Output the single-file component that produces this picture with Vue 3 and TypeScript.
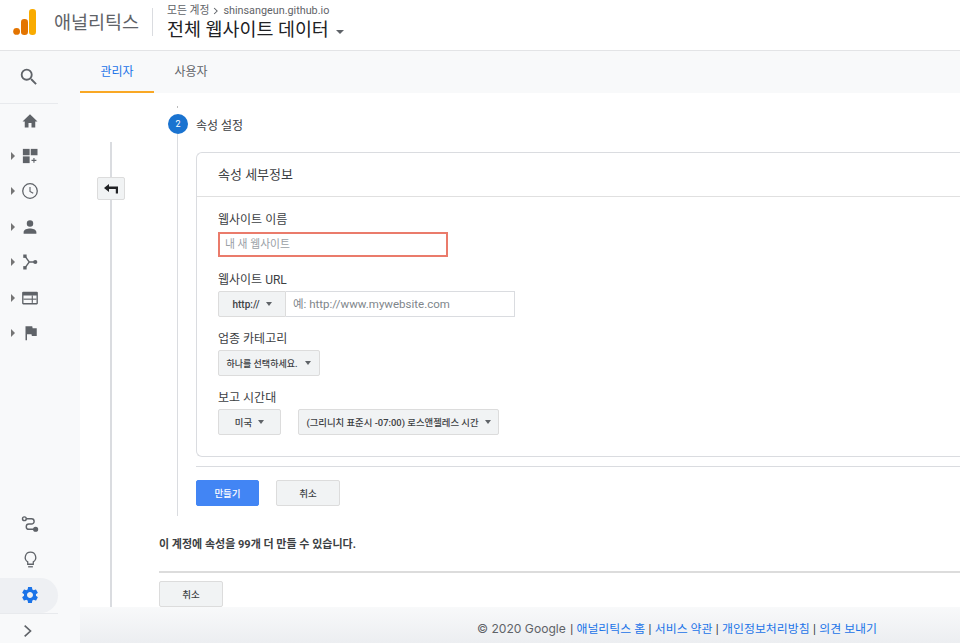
<script setup lang="ts">
const navTop = [
  { id: 'home', arrow: false },
  { id: 'custom', arrow: true },
  { id: 'clock', arrow: true },
  { id: 'person', arrow: true },
  { id: 'acq', arrow: true },
  { id: 'behavior', arrow: true },
  { id: 'flag', arrow: true },
]
const footerLinks = ['애널리틱스 홈', '서비스 약관', '개인정보처리방침', '의견 보내기']
</script>

<template>
  <div class="app">
    <header class="topbar">
      <svg class="logo" viewBox="0 0 24 26" width="24" height="26">
        <rect x="16" y="0" width="7" height="26" rx="3.2" fill="#f9ab00" />
        <rect x="8" y="10" width="7" height="16" rx="3.2" fill="#e37400" />
        <circle cx="3.6" cy="22.4" r="3.4" fill="#e37400" />
      </svg>
      <span class="brand">애널리틱스</span>
      <div class="divider"></div>
      <div class="crumbs">
        <div class="crumb-top">
          <span>모든 계정</span>
          <svg viewBox="0 0 8 10" width="6" height="8"><path d="M1.5 1l4 4-4 4" fill="none" stroke="#5f6368" stroke-width="1.4" /></svg>
          <span>shinsangeun.github.io</span>
        </div>
        <div class="view-name">전체 웹사이트 데이터<i class="caret big"></i></div>
      </div>
    </header>

    <div class="body">
      <aside class="sidebar">
        <div class="nav-search">
          <svg viewBox="0 0 24 24" width="22" height="22"><path fill="#5f6368" d="M15.5 14h-.79l-.28-.27A6.47 6.47 0 0 0 16 9.5 6.5 6.5 0 1 0 9.5 16c1.61 0 3.09-.59 4.23-1.57l.27.28v.79l5 4.99L20.49 19l-4.99-5zm-6 0C7.01 14 5 11.99 5 9.5S7.01 5 9.5 5 14 7.01 14 9.5 11.99 14 9.5 14z" /></svg>
        </div>
        <nav class="nav-list">
          <div v-for="item in navTop" :key="item.id" class="nav-row">
            <i v-if="item.arrow" class="tri"></i>
            <svg viewBox="0 0 24 24" width="18" height="18" fill="#5f6368">
              <path v-if="item.id === 'home'" d="M10 20.5v-6h4v6h5v-8h3L12 3 2 12.500h3v8z" />
              <template v-else-if="item.id === 'custom'">
                <rect x="2.500" y="2.500" width="9" height="8.500" />
                <rect x="13" y="2.500" width="9" height="8.500" />
                <rect x="2.500" y="12.500" width="9" height="9" />
                <path d="M16.500 14.500h1.500v2.500h2.500v1.500H18V21h-1.500v-2.500H14V17h2.500z" />
              </template>
              <template v-else-if="item.id === 'clock'">
                <circle cx="12" cy="12" r="9.700" fill="none" stroke="#5f6368" stroke-width="1.700" />
                <path d="M12 6.500v6l4.300 2.600" fill="none" stroke="#5f6368" stroke-width="1.500" />
              </template>
              <path v-else-if="item.id === 'person'" d="M12 11.500a4.300 4.300 0 1 0 0-8.600 4.300 4.300 0 0 0 0 8.600zm0 2.500c-3.300 0-8.500 1.500-8.500 4.600V21h17v-2.400c0-3.100-5.200-4.600-8.500-4.600z" />
              <template v-else-if="item.id === 'acq'">
                <rect x="3" y="2" width="4.500" height="4.500" />
                <rect x="3" y="17.500" width="4.500" height="4.500" />
                <circle cx="19" cy="12" r="2.800" />
                <path d="M5.500 4.500L11 12H18M11 12L5.500 19.500" fill="none" stroke="#5f6368" stroke-width="1.800" />
              </template>
              <template v-else-if="item.id === 'behavior'">
                <path fill-rule="evenodd" d="M3 3.500h18a1.500 1.500 0 0 1 1.500 1.500v14a1.500 1.500 0 0 1-1.500 1.500H3A1.500 1.500 0 0 1 1.500 19V5A1.500 1.500 0 0 1 3 3.500zM3.300 8.500v10.200h17.400V8.500z" />
                <rect x="3.300" y="12.800" width="17.400" height="1.500" />
                <rect x="14.300" y="8.500" width="1.500" height="10" />
              </template>
              <path v-else d="M6 3h9l.5 2.500H21V16h-6.500L14 13.500H8v8H6z" />
            </svg>
          </div>
        </nav>
        <div class="nav-bottom">
          <div class="nav-row">
            <svg viewBox="0 0 24 24" width="18" height="18" fill="none" stroke="#5f6368" stroke-width="1.900">
              <circle cx="4.500" cy="5" r="2.500" />
              <circle cx="19.500" cy="19" r="2.500" fill="#5f6368" />
              <path d="M7 5h7a3.500 3.500 0 0 1 0 7h-3.500a3.500 3.500 0 0 0 0 7H17" />
            </svg>
          </div>
          <div class="nav-row">
            <svg viewBox="0 0 24 24" width="19" height="19" fill="none" stroke="#5f6368" stroke-width="1.600">
              <path d="M12 2.800a6.600 6.600 0 0 0-3.500 12.200V18h7v-3A6.600 6.600 0 0 0 12 2.800z" />
              <path d="M9 21.200h6" />
            </svg>
          </div>
          <div class="nav-row active">
            <svg viewBox="0 0 24 24" width="20" height="20"><path fill="#1a73e8" d="M19.140 12.940c.04-.3.06-.61.06-.94 0-.32-.02-.64-.07-.94l2.030-1.580a.49.49 0 0 0 .12-.61l-1.920-3.320a.488.488 0 0 0-.59-.22l-2.390.96c-.5-.38-1.030-.7-1.620-.94l-.36-2.540a.484.484 0 0 0-.48-.41h-3.840c-.24 0-.43.17-.47.41l-.36 2.540c-.59.24-1.130.57-1.620.94l-2.390-.96c-.22-.08-.47 0-.59.22L2.740 8.870c-.12.21-.08.47.12.61l2.030 1.580c-.05.3-.09.63-.09.94s.02.64.07.94l-2.030 1.580a.49.49 0 0 0-.12.61l1.920 3.320c.12.22.37.29.59.22l2.390-.96c.5.38 1.030.7 1.620.94l.36 2.540c.05.24.24.41.48.41h3.840c.24 0 .44-.17.47-.41l.36-2.540c.59-.24 1.130-.56 1.620-.94l2.390.96c.22.08.47 0 .59-.22l1.920-3.320c.12-.22.07-.47-.12-.61l-2.010-1.580zM12 15.600c-1.980 0-3.600-1.620-3.600-3.600s1.620-3.600 3.600-3.600 3.600 1.620 3.600 3.600-1.620 3.600-3.600 3.600z" /></svg>
          </div>
          <div class="nav-row expand">
            <svg viewBox="0 0 12 16" width="10" height="14"><path d="M2 1.500L9 8l-7 6.500" fill="none" stroke="#5f6368" stroke-width="2" /></svg>
          </div>
        </div>
      </aside>

      <div class="main">
        <div class="tabs">
          <div class="tab active">관리자</div>
          <div class="tab">사용자</div>
        </div>

        <div class="content">
          <div class="rail">
            <div class="rail-line short"></div>
            <button class="back" type="button">
              <svg viewBox="0 0 14 10" width="14" height="10"><path d="M0 4l5-4v2.500h9V9.500h-2.200V5H5v3z" fill="#202124" /></svg>
            </button>
            <div class="rail-line"></div>
          </div>

          <div class="wizard">
            <div class="tick"></div>
            <div class="step-head">
              <span class="step-num">2</span>
              <span class="step-title">속성 설정</span>
            </div>
            <div class="step-body">
              <section class="card">
                <h2 class="card-title">속성 세부정보</h2>
                <div class="card-form">
                  <label class="field-label">웹사이트 이름</label>
                  <div class="text-input error">내 새 웹사이트</div>

                  <label class="field-label">웹사이트 URL</label>
                  <div class="url-row">
                    <div class="select proto">http://<i class="caret"></i></div>
                    <div class="text-input url">예: http://www.mywebsite.com</div>
                  </div>

                  <label class="field-label">업종 카테고리</label>
                  <div class="select-row">
                    <div class="select category">하나를 선택하세요.<i class="caret"></i></div>
                  </div>

                  <label class="field-label">보고 시간대</label>
                  <div class="select-row tz">
                    <div class="select country">미국<i class="caret"></i></div>
                    <div class="select zone">(그리니치 표준시 -07:00) 로스앤젤레스 시간<i class="caret"></i></div>
                  </div>
                </div>
              </section>
              <div class="rule"></div>
              <div class="actions">
                <button class="btn primary" type="button">만들기</button>
                <button class="btn" type="button">취소</button>
              </div>
            </div>
            <p class="quota">이 계정에 속성을 99개 더 만들 수 있습니다.</p>
            <div class="rule bottom"></div>
            <button class="btn cancel" type="button">취소</button>
          </div>
        </div>

        <footer class="footer">
          <span class="copy">© 2020 Google</span>
          <template v-for="link in footerLinks" :key="link">
            <span class="sep">|</span><a class="link">{{ link }}</a>
          </template>
        </footer>
      </div>
    </div>
  </div>
</template>

<style>
html, body {
  margin: 0;
  height: 100%;
  overflow: hidden;
  background: #fff;
}
</style>

<style scoped>
.app {
  width: 960px;
  height: 643px;
  display: flex;
  flex-direction: column;
  overflow: hidden;
  font-family: Roboto, "Noto Sans CJK KR", sans-serif;
  color: #3c4043;
}

.topbar {
  height: 51px;
  flex: none;
  display: flex;
  align-items: flex-start;
  padding-left: 13px;
  box-sizing: border-box;
  border-bottom: 1px solid #e3e4e6;
  background: #fff;
}

.logo {
  margin-top: 9px;
  flex: none;
}

.brand {
  margin: 9px 0 0 17px;
  font-size: 18.500px;
  line-height: 28px;
  color: #5f6368;
  width: 84px;
  white-space: nowrap;
}

.divider {
  width: 1px;
  height: 28px;
  margin: 8px 14px 0 14px;
  background: #dadce0;
}

.crumbs {
  padding-top: 4px;
}

.crumb-top {
  display: flex;
  align-items: center;
  gap: 4px;
  font-size: 10.800px;
  line-height: 13px;
  color: #5f6368;
}

.view-name {
  font-size: 18.450px;
  line-height: 26px;
  color: #202124;
  white-space: nowrap;
  display: flex;
  align-items: center;
}

.caret {
  display: inline-block;
  width: 0;
  height: 0;
  border-left: 4px solid transparent;
  border-right: 4px solid transparent;
  border-top: 4px solid #5f6368;
  margin-left: 6px;
}

.caret.big {
  margin-left: 7px;
  margin-top: 3px;
  border-left-width: 4.500px;
  border-right-width: 4.500px;
}

.body {
  flex: 1;
  display: flex;
  min-height: 0;
}

.sidebar {
  width: 80px;
  flex: none;
  background: #f8f9fa;
  display: flex;
  flex-direction: column;
}

.nav-search {
  width: 58px;
  height: 53px;
  box-sizing: border-box;
  padding-top: 15px;
  display: flex;
  justify-content: center;
  border-bottom: 1px solid #e8eaed;
}

.nav-list {
  margin-top: -1px;
}

.nav-row {
  position: relative;
  width: 58px;
  height: 35.400px;
  box-sizing: border-box;
  padding-left: 2px;
  display: flex;
  align-items: center;
  justify-content: center;
}

.tri {
  position: absolute;
  left: 11px;
  top: 50%;
  margin-top: -4px;
  width: 0;
  height: 0;
  border-top: 4px solid transparent;
  border-bottom: 4px solid transparent;
  border-left: 4px solid #757575;
}

.nav-bottom {
  margin-top: auto;
}

.nav-bottom .nav-row {
  height: 35.500px;
}

.nav-row.active {
  background: #eef0f3;
  border-radius: 0 18px 18px 0;
}

.nav-bottom .nav-row.expand {
  height: 30px;
  padding: 10px 2px 0 0;
  align-items: flex-start;
  border-top: 1px solid #e8eaed;
}

.main {
  flex: 1;
  min-width: 0;
  display: flex;
  flex-direction: column;
}

.tabs {
  height: 42px;
  flex: none;
  display: flex;
  background: #f8f9fa;
}

.tab {
  width: 74px;
  height: 42px;
  box-sizing: border-box;
  font-size: 12px;
  line-height: 42px;
  text-align: center;
  color: #5f6368;
}

.tab.active {
  color: #1a73e8;
  border-bottom: 2px solid #f9a825;
}

.content {
  flex: 1;
  min-height: 0;
  overflow: hidden;
  display: flex;
  padding-left: 17px;
  background: #fff;
}

.rail {
  width: 28px;
  flex: none;
  display: flex;
  flex-direction: column;
  align-items: center;
  padding-top: 49px;
}

.rail-line {
  width: 2px;
  flex: 1;
  background: #dadce0;
}

.rail-line.short {
  flex: none;
  height: 35px;
}

.back {
  flex: none;
  width: 28px;
  height: 23px;
  padding: 0;
  border: 1px solid #dcdcdc;
  border-radius: 2px;
  background: #f1f3f4;
  display: flex;
  align-items: center;
  justify-content: center;
}

.wizard {
  flex: 1;
  min-width: 0;
  padding-left: 34px;
}

.tick {
  width: 1px;
  height: 2px;
  margin: 13px 0 0 18px;
  background: #bdbdbd;
}

.step-head {
  display: flex;
  align-items: center;
  height: 20px;
  margin: 6px 0 0 9px;
}

.step-num {
  width: 20px;
  height: 20px;
  border-radius: 50%;
  background: #1a73d0;
  color: #fff;
  font-size: 9px;
  line-height: 20px;
  text-align: center;
}

.step-title {
  margin-left: 8px;
  font-size: 12px;
  color: #3c4043;
}

.step-body {
  margin: 0 0 0 18px;
  padding: 18px 0 0 18px;
  border-left: 1px solid #dadce0;
  height: 382px;
  box-sizing: border-box;
}

.card {
  height: 305px;
  box-sizing: border-box;
  border: 1px solid #dadce0;
  border-right: none;
  border-radius: 6px 0 0 6px;
  background: #fff;
}

.card-title {
  margin: 0;
  height: 44px;
  box-sizing: border-box;
  padding-left: 21px;
  border-bottom: 1px solid #e0e0e0;
  font-size: 13px;
  font-weight: 400;
  line-height: 44px;
  color: #3c4043;
}

.card-form {
  padding: 15px 0 0 21px;
}

.field-label {
  display: block;
  font-size: 12px;
  line-height: 17px;
  margin-bottom: 2px;
  color: #3c4043;
}

.text-input {
  box-sizing: border-box;
  height: 25px;
  font-size: 11px;
  line-height: 23px;
  padding-left: 6px;
  color: #80868b;
  background: #fff;
  border: 1px solid #dadce0;
}

.text-input.error {
  width: 230px;
  border: 2px solid #ea7b6b;
  font-size: 10.800px;
  line-height: 21px;
  padding-left: 5px;
  margin: 3px 0 15px;
  color: #9aa0a6;
}

.url-row {
  display: flex;
  margin-bottom: 14px;
}

.text-input.url {
  width: 229px;
  border-left: none;
  height: 26px;
  line-height: 24px;
  font-size: 11.500px;
  padding-left: 7px;
}

.select {
  box-sizing: border-box;
  height: 26px;
  display: flex;
  align-items: center;
  justify-content: center;
  background: #f1f3f4;
  border: 1px solid #dcdcdc;
  border-radius: 2px;
  font-size: 9.400px;
  color: #3c4043;
  font-weight: 500;
  white-space: nowrap;
}

.select .caret {
  border-left-width: 3.500px;
  border-right-width: 3.500px;
}

.select.proto {
  width: 68px;
  font-size: 10px;
  border-radius: 2px 0 0 2px;
}

.select-row {
  display: flex;
  margin-bottom: 14px;
}

.select.category {
  width: 102px;
  font-size: 9px;
}

.select.category .caret {
  margin-left: 8px;
}

.select.country {
  width: 63px;
}

.select.zone {
  width: 201px;
  margin-left: 17px;
}

.rule {
  height: 1px;
  margin-top: 9px;
  background: #dadce0;
}

.actions {
  display: flex;
  gap: 17px;
  margin-top: 13px;
}

.btn {
  box-sizing: border-box;
  width: 64px;
  height: 26px;
  padding: 0;
  border: 1px solid #dcdcdc;
  border-radius: 2px;
  background: #f1f3f4;
  font-family: inherit;
  font-size: 9.500px;
  font-weight: 500;
  color: #3c4043;
}

.btn.primary {
  width: 63px;
  background: #4285f4;
  border-color: #4285f4;
  color: #fff;
}

.quota {
  margin: 21px 0 0;
  font-size: 11px;
  line-height: 16px;
  font-weight: 700;
  color: #3c4043;
}

.rule.bottom {
  height: 2px;
  margin-top: 18px;
  background: #dcdcdc;
}

.btn.cancel {
  display: block;
  margin-top: 8px;
}

.footer {
  height: 36px;
  flex: none;
  box-sizing: border-box;
  padding: 14px 0 0 397px;
  display: flex;
  background: linear-gradient(#f8f9fa, #eceef1);
  font-size: 11.900px;
  line-height: 16px;
  white-space: nowrap;
}

.copy {
  font-family: Inter, sans-serif;
  font-size: 12.100px;
  color: #5f6368;
  margin-right: 1px;
}

.sep {
  margin: 0 3.400px;
  color: #3c4043;
}

.link {
  color: #1a73e8;
}
</style>
